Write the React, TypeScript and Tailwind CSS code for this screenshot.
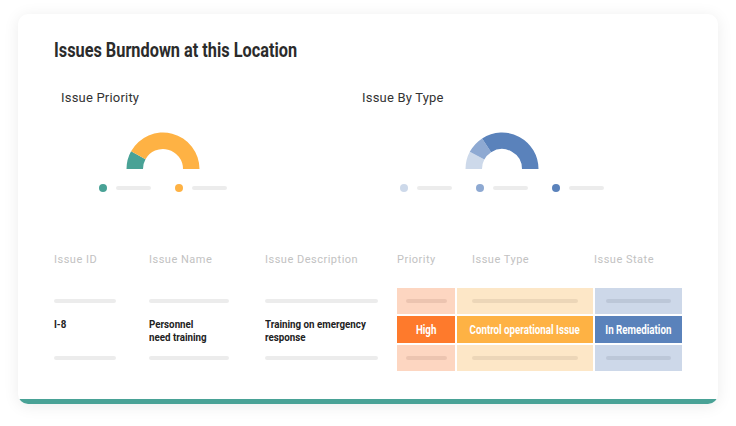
type Seg = { from: number; to: number; color: string };

function arc(from: number, to: number, R: number, r: number, cx: number, cy: number) {
    const rad = (d: number) => (d * Math.PI) / 180;
    const p = (rr: number, a: number) => `${cx + rr * Math.cos(rad(a))} ${cy - rr * Math.sin(rad(a))}`;
    return `M ${p(R, from)} A ${R} ${R} 0 0 1 ${p(R, to)} L ${p(r, to)} A ${r} ${r} 0 0 0 ${p(r, from)} Z`;
}

function Donut({ segs }: { segs: Seg[] }) {
    return (
        <svg width="74" height="37" viewBox="0 0 74 37" className="block">
            {segs.map((s, i) => (
                <path key={i} d={arc(s.from, s.to, 36.5, 20, 37, 37)} fill={s.color} />
            ))}
        </svg>
    );
}

function Legend({ colors }: { colors: string[] }) {
    return (
        <div className="flex items-center gap-[24px]">
            {colors.map((c) => (
                <div key={c} className="flex items-center gap-[9px]">
                    <span className="w-[8px] h-[8px] rounded-full" style={{ backgroundColor: c }} />
                    <span className="w-[35px] h-[4px] rounded-full bg-[#ececec]" />
                </div>
            ))}
        </div>
    );
}

function Bar({ w, className = 'bg-[#ececec]' }: { w: string; className?: string }) {
    return <div className={`${w} h-[4px] rounded-full ${className}`} />;
}

// condensed look: Roboto bold squeezed horizontally
function Cond({ children, center = false, scale = 'scale-x-[0.78]' }: { children: React.ReactNode; center?: boolean; scale?: string }) {
    return (
        <span className={`inline-block whitespace-nowrap ${scale} ${center ? 'origin-center' : 'origin-left'}`}>
            {children}
        </span>
    );
}

function PlaceholderRow() {
    return (
        <div className="flex h-[26px]">
            <div className="w-[95px] flex items-center"><Bar w="w-[62px]" /></div>
            <div className="w-[116px] flex items-center"><Bar w="w-[80px]" /></div>
            <div className="w-[132px] flex items-center"><Bar w="w-[113px]" /></div>
            <div className="flex gap-[2px]">
                <div className="w-[58px] bg-[#fdd6c1] flex items-center justify-center"><Bar w="w-[41px]" className="bg-[#ecc4b0]" /></div>
                <div className="w-[136px] bg-[#fde7c7] flex items-center justify-center"><Bar w="w-[106px]" className="bg-[#ecd6b8]" /></div>
                <div className="w-[87px] bg-[#cdd8e9] flex items-center justify-center"><Bar w="w-[65px]" className="bg-[#bcc7d8]" /></div>
            </div>
        </div>
    );
}

export default function App() {
    const left = 'scale-x-[0.85]';
    return (
        <div className="w-[736px] h-[426px] bg-white pt-[14px] pl-[18px] font-['Roboto',sans-serif]">
            <div className="w-[700px] h-[390px] bg-white rounded-[10px] shadow-[0_2px_16px_rgba(0,0,0,0.08)] overflow-hidden flex flex-col">
                <div className="flex-1 pl-[36px] pt-[24px]">
                    <h2 className="font-bold text-[20px] leading-[24px] text-[#2b2b2b]">
                        <Cond scale="scale-x-[0.815]">Issues Burndown at this Location</Cond>
                    </h2>

                    <div className="flex mt-[28px] pl-[7px]">
                        <div className="w-[301px]">
                            <p className="text-[13px] leading-[16px] text-[#333] tracking-[0.2px]">Issue Priority</p>
                            <div className="ml-[65px] mt-[26px]">
                                <Donut
                                    segs={[
                                        { from: 180, to: 151, color: '#49a296' },
                                        { from: 151, to: 0, color: '#feb244' },
                                    ]}
                                />
                            </div>
                            <div className="ml-[38px] mt-[15px]">
                                <Legend colors={['#49a296', '#feb244']} />
                            </div>
                        </div>
                        <div>
                            <p className="text-[13px] leading-[16px] text-[#333] tracking-[0.2px]">Issue By Type</p>
                            <div className="ml-[103px] mt-[26px]">
                                <Donut
                                    segs={[
                                        { from: 180, to: 152, color: '#cdd9ea' },
                                        { from: 152, to: 123, color: '#8ea9d2' },
                                        { from: 123, to: 0, color: '#5a82bb' },
                                    ]}
                                />
                            </div>
                            <div className="ml-[38px] mt-[15px]">
                                <Legend colors={['#cdd9ea', '#8ea9d2', '#5a82bb']} />
                            </div>
                        </div>
                    </div>

                    <div className="mt-[61px] flex text-[11px] leading-[14px] text-[#c2c2c2] tracking-[0.5px]">
                        <div className="w-[95px]">Issue ID</div>
                        <div className="w-[116px]">Issue Name</div>
                        <div className="w-[132px]">Issue Description</div>
                        <div className="w-[75px]">Priority</div>
                        <div className="w-[122px]">Issue Type</div>
                        <div>Issue State</div>
                    </div>

                    <div className="mt-[21px] flex flex-col gap-[2px]">
                        <PlaceholderRow />
                        <div className="flex h-[27px] font-bold text-[11.5px] leading-[13px] text-[#222]">
                            <div className="w-[95px] pt-[2px]"><Cond scale={left}>I-8</Cond></div>
                            <div className="w-[116px] pt-[2px]"><Cond scale={left}>Personnel</Cond><br /><Cond scale={left}>need training</Cond></div>
                            <div className="w-[132px] pt-[2px]"><Cond scale={left}>Training on emergency</Cond><br /><Cond scale={left}>response</Cond></div>
                            <div className="flex gap-[2px] text-white text-[12.5px]">
                                <div className="w-[58px] bg-[#fe7a2c] flex items-center justify-center"><Cond center>High</Cond></div>
                                <div className="w-[136px] bg-[#feb244] flex items-center justify-center"><Cond center>Control operational Issue</Cond></div>
                                <div className="w-[87px] bg-[#5a82bb] flex items-center justify-center"><Cond center>In Remediation</Cond></div>
                            </div>
                        </div>
                        <PlaceholderRow />
                    </div>
                </div>
                <div className="h-[5px] bg-[#49a296]" />
            </div>
        </div>
    );
}
